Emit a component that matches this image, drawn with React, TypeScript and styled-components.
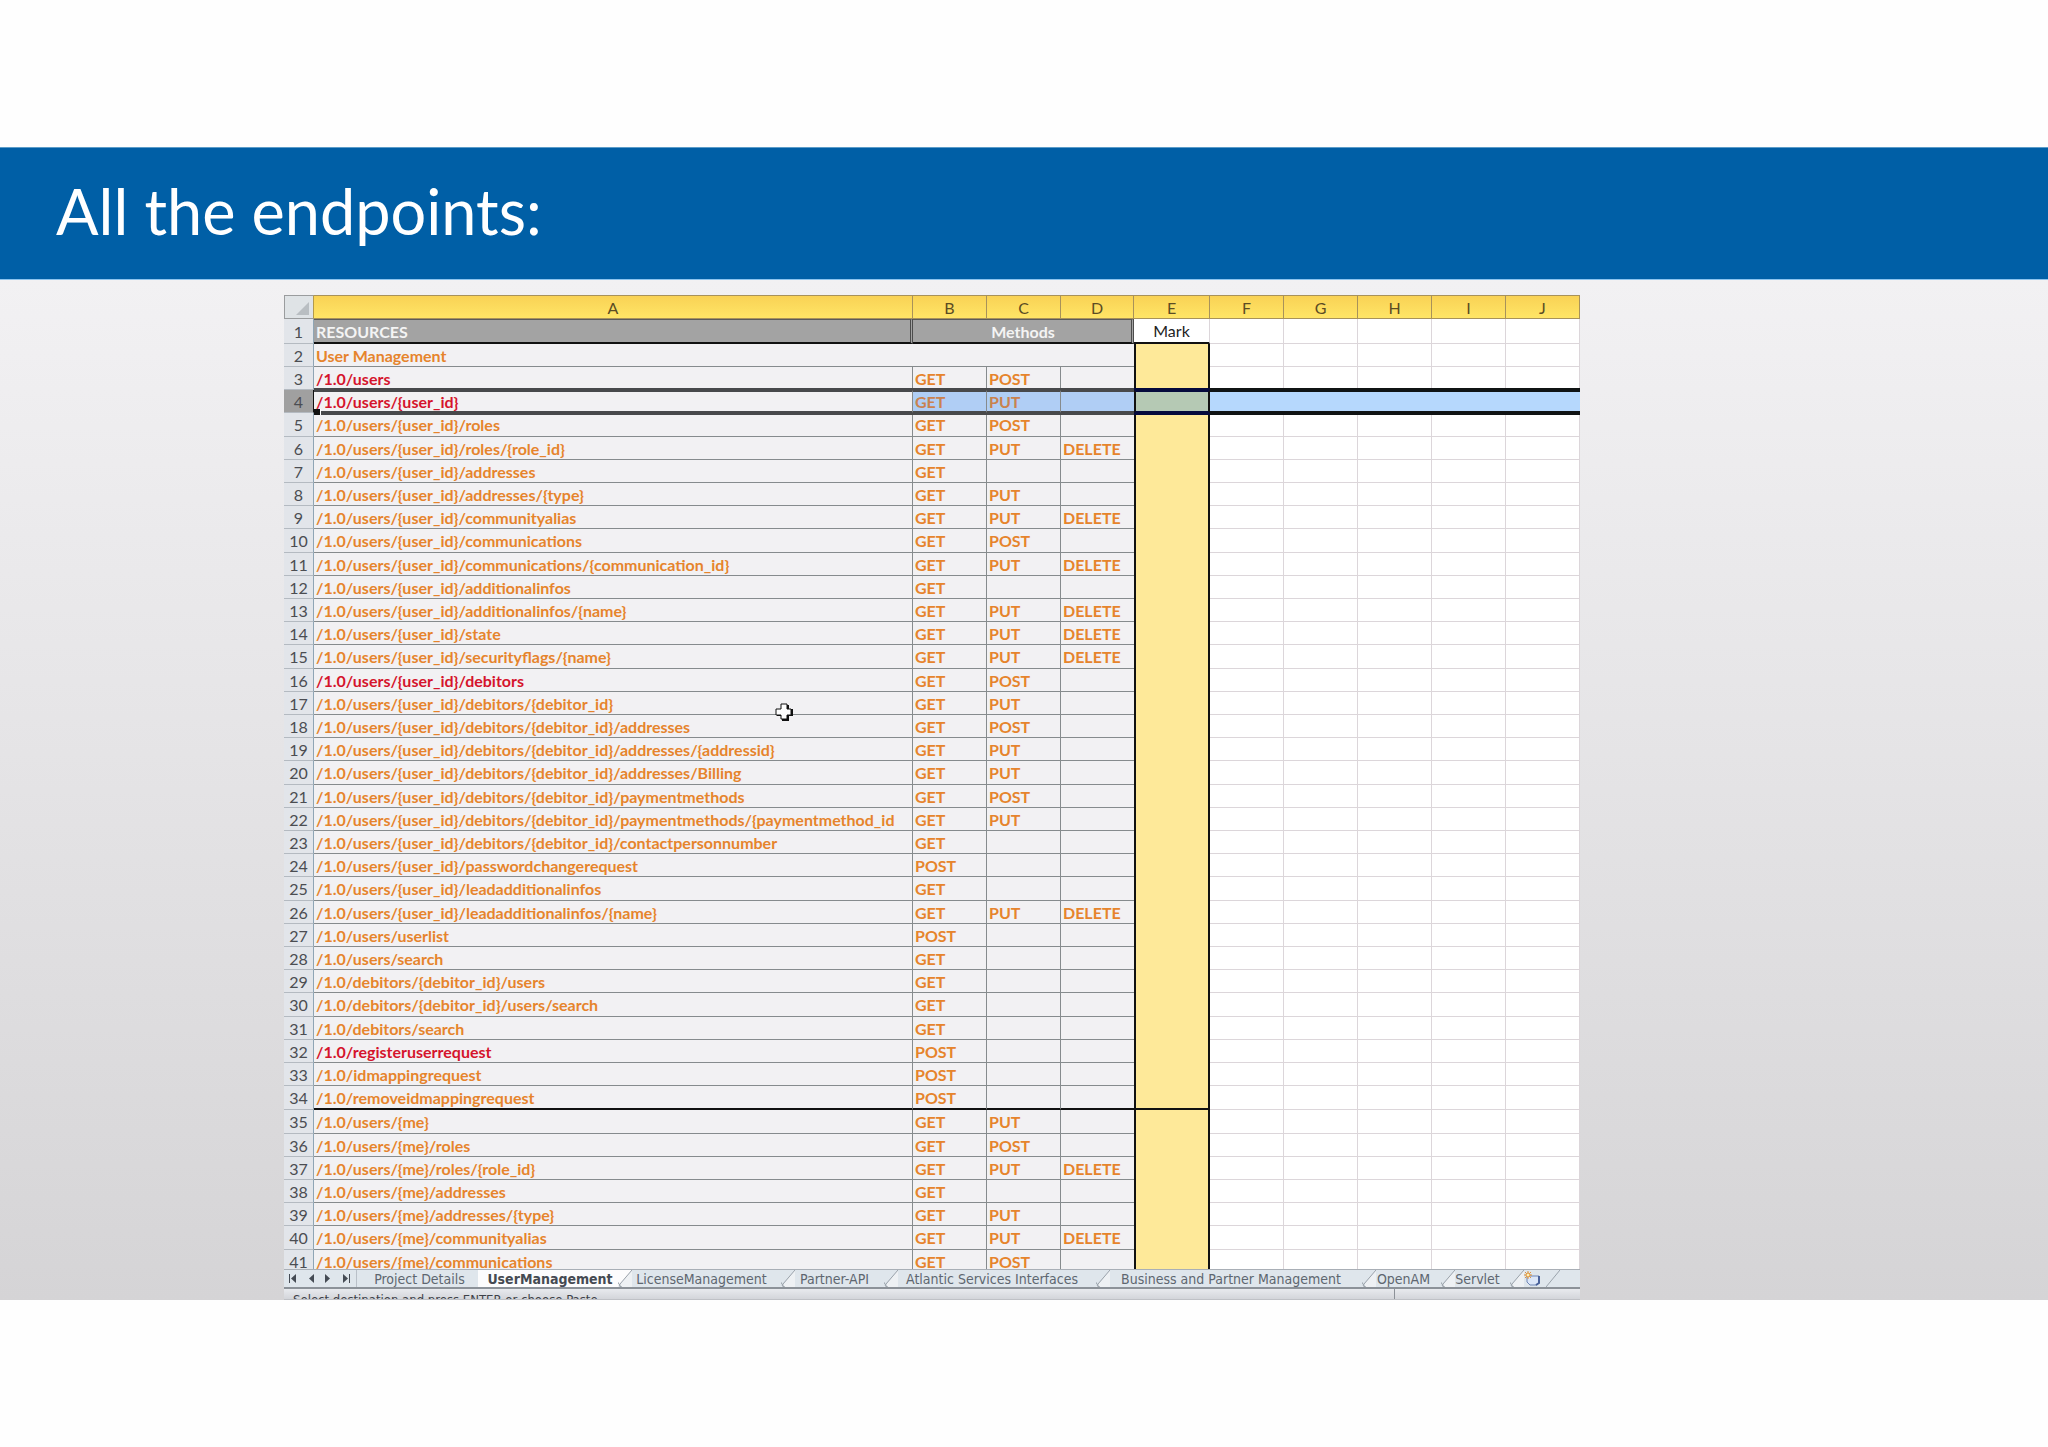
import React from "react";
import styled, { createGlobalStyle, css } from "styled-components";

type Tone = "orange" | "red";
interface Endpoint {
  path: string;
  methods: string[];
  tone?: Tone;
}

const U = "/1.0/users/{user_id}";
const M = "/1.0/users/{me}";
const D = U + "/debitors/{debitor_id}";

const ep = (path: string, methods: string, tone: Tone = "orange"): Endpoint => ({
  path,
  methods: methods.split(" "),
  tone,
});

const endpoints: Endpoint[] = [
  ep("/1.0/users", "GET POST", "red"),
  ep(U, "GET PUT", "red"),
  ep(U + "/roles", "GET POST"),
  ep(U + "/roles/{role_id}", "GET PUT DELETE"),
  ep(U + "/addresses", "GET"),
  ep(U + "/addresses/{type}", "GET PUT"),
  ep(U + "/communityalias", "GET PUT DELETE"),
  ep(U + "/communications", "GET POST"),
  ep(U + "/communications/{communication_id}", "GET PUT DELETE"),
  ep(U + "/additionalinfos", "GET"),
  ep(U + "/additionalinfos/{name}", "GET PUT DELETE"),
  ep(U + "/state", "GET PUT DELETE"),
  ep(U + "/securityflags/{name}", "GET PUT DELETE"),
  ep(U + "/debitors", "GET POST", "red"),
  ep(D, "GET PUT"),
  ep(D + "/addresses", "GET POST"),
  ep(D + "/addresses/{addressid}", "GET PUT"),
  ep(D + "/addresses/Billing", "GET PUT"),
  ep(D + "/paymentmethods", "GET POST"),
  ep(D + "/paymentmethods/{paymentmethod_id", "GET PUT"),
  ep(D + "/contactpersonnumber", "GET"),
  ep(U + "/passwordchangerequest", "POST"),
  ep(U + "/leadadditionalinfos", "GET"),
  ep(U + "/leadadditionalinfos/{name}", "GET PUT DELETE"),
  ep("/1.0/users/userlist", "POST"),
  ep("/1.0/users/search", "GET"),
  ep("/1.0/debitors/{debitor_id}/users", "GET"),
  ep("/1.0/debitors/{debitor_id}/users/search", "GET"),
  ep("/1.0/debitors/search", "GET"),
  ep("/1.0/registeruserrequest", "POST", "red"),
  ep("/1.0/idmappingrequest", "POST"),
  ep("/1.0/removeidmappingrequest", "POST"),
  ep(M, "GET PUT"),
  ep(M + "/roles", "GET POST"),
  ep(M + "/roles/{role_id}", "GET PUT DELETE"),
  ep(M + "/addresses", "GET"),
  ep(M + "/addresses/{type}", "GET PUT"),
  ep(M + "/communityalias", "GET PUT DELETE"),
  ep(M + "/communications", "GET POST"),
];

const SELECTED_ROW = 4;
const GROUP_END_ROW = 34;
const plainColumns = ["F", "G", "H", "I", "J"];

const tabs = [
  { name: "Project Details", width: 121 },
  { name: "UserManagement", width: 140, active: true },
  { name: "LicenseManagement", width: 163 },
  { name: "Partner-API", width: 103 },
  { name: "Atlantic Services Interfaces", width: 212 },
  { name: "Business and Partner Management", width: 266 },
  { name: "OpenAM", width: 79 },
  { name: "Servlet", width: 69 },
];

const colors = {
  orange: "#e6842c",
  red: "#d5142c",
  line: "#868b8d",
  faint: "#dcd6da",
  panel: "#f2f1f3",
};

const GlobalStyle = createGlobalStyle`
  * { box-sizing: border-box; }
  body { margin: 0; background: #fefefe; }
`;

const Page = styled.main`
  padding-top: 147px;
  font-family: Lato, "Open Sans", sans-serif;
`;

const Banner = styled.header`
  display: flex;
  align-items: center;
  height: 133px;
  padding: 0 56px 6px;
  background: #005fa6;
  border-top: 1px solid #5c9cc8;
  border-bottom: 1px solid #8cc4ee;
`;

const Title = styled.h1`
  margin: 0;
  font-size: 63px;
  line-height: 72px;
  font-weight: 400;
  color: #fff;
`;

const Body = styled.section`
  display: grid;
  grid-template-columns: minmax(0, 284fr) minmax(0, 1296fr) minmax(0, 468fr);
  padding-top: 15px;
  background: linear-gradient(#f2f1f3, #e4e3e5 50%, #d5d4d6);
`;

const Workbook = styled.div`
  grid-column: 2;
  display: flex;
  flex-direction: column;
  min-width: 0;
`;

const Pane = styled.div`
  position: relative;
  height: 974px;
  overflow: hidden;
  background: #fff;
`;

const Sheet = styled.table`
  width: 100%;
  table-layout: fixed;
  border-collapse: separate;
  border-spacing: 0;
  font-size: 16px;
  line-height: 18px;
`;

const Col = styled.col<{ $w?: number }>`
  ${(p) => p.$w && `width: ${p.$w}px;`}
`;

const Row = styled.tr<{ $h: number }>`
  height: ${(p) => p.$h}px;
`;

const Corner = styled.td`
  padding: 0 4px 3px 0;
  background: #dfe3e6;
  border: 1px solid #9a9c9e;
  border-right-color: #b39a4c;
  text-align: right;
  vertical-align: bottom;
  line-height: 0;
`;

const ColumnHead = styled.th`
  padding: 2px 0 0;
  font-weight: 400;
  color: #5b4c24;
  background: linear-gradient(#f9d255, #ffe566);
  border: solid #a8925a;
  border-width: 1px 1px 1px 0;
`;

const RowHead = styled.th<{ $selected?: boolean }>`
  padding: 1px 0 0;
  font-weight: 400;
  color: #4b4d52;
  background: ${(p) => (p.$selected ? "#a0a0a0" : "#e2e5ea")};
  border-right: 1px solid ${(p) => (p.$selected ? "#111" : "#8fa5b5")};
  border-bottom: 1px solid #b4bac1;
`;

const cell = css`
  padding: 1px 0 0 2px;
  text-align: left;
  white-space: nowrap;
  overflow: hidden;
`;

const TitleCell = styled.th<{ $center?: boolean }>`
  ${cell}
  color: #f4f4f4;
  background: #a3a3a3;
  border-top: 1px solid #5a5a5a;
  border-right: 3px double #4c4c4c;
  border-bottom: 2px solid #111;
  text-align: ${(p) => (p.$center ? "center" : "left")};
`;

const MarkHead = styled.th`
  ${cell}
  padding-left: 0;
  font-weight: 400;
  text-align: center;
  color: #222;
  border-right: 1px solid ${colors.faint};
  border-bottom: 2px solid #111;
`;

const selectedEdge = (color: string) => css`
  position: relative;
  z-index: 1;
  padding-top: 0;
  overflow: visible;
  border-top: 2px solid ${color};
  border-bottom: 2px solid ${color};
  box-shadow: 0 -2px 0 ${color}, 0 2px 0 ${color};
`;

const DataCell = styled.td<{ $tone?: Tone; $first?: boolean; $selected?: boolean; $groupEnd?: boolean; $last?: boolean }>`
  ${cell}
  font-weight: 700;
  color: ${(p) => colors[p.$tone ?? "orange"]};
  background: ${(p) => (p.$selected && !p.$first ? "#b0cef5" : colors.panel)};
  border-right: ${(p) => (p.$last ? "0" : `1px solid ${colors.line}`)};
  border-bottom: 1px solid ${colors.line};
  ${(p) => p.$groupEnd && "border-bottom: 2px solid #111;"}
  ${(p) => p.$selected && selectedEdge("#48494b")}
  ${(p) => p.$selected && !p.$first && "color: #c9824f;"}
`;

const MarkCell = styled.td<{ $selected?: boolean; $groupEnd?: boolean }>`
  padding: 0;
  background: ${(p) => (p.$selected ? "#b5c9b4" : "#fee999")};
  border: solid #111;
  border-width: 0 2px;
  ${(p) => p.$groupEnd && "border-bottom: 2px solid #111;"}
  ${(p) => p.$selected && selectedEdge("#050a3c")}
`;

const BlankCell = styled.td<{ $selected?: boolean }>`
  padding: 0;
  border-right: 1px solid ${colors.faint};
  border-bottom: 1px solid ${colors.faint};
  ${(p) => p.$selected && selectedEdge("#101414")}
  ${(p) => p.$selected && "background: #b6d8fd; border-right: 0;"}
`;

const FillHandle = styled.span`
  position: absolute;
  left: 0;
  bottom: -4px;
  width: 7px;
  height: 6px;
  background: #111;
  border-right: 1px solid #fff;
`;

const Pointer = styled.svg`
  position: absolute;
  left: 491px;
  top: 408px;
  z-index: 2;
`;

const TabBar = styled.nav`
  display: flex;
  height: 20px;
  background: #dfe6ec;
  border-top: 1px solid #a9afb6;
  border-bottom: 2px solid #8c9299;
  font-family: "DejaVu Sans Condensed", "Noto Sans", sans-serif;
`;

const Scrollers = styled.div`
  display: flex;
  align-items: center;
  justify-content: space-between;
  width: 73px;
  padding: 0 6px 0 5px;
  border-right: 1px solid #b9c0c8;
`;

const PlainButton = styled.button`
  display: flex;
  padding: 0;
  border: 0;
  background: none;
`;

const Tab = styled.button<{ $w: number; $active?: boolean }>`
  position: relative;
  flex: 0 0 ${(p) => p.$w}px;
  padding: 0 0 0 4px;
  border: 0;
  font-family: inherit;
  font-size: 14px;
  line-height: 18px;
  white-space: nowrap;
  color: ${(p) => (p.$active ? "#454a52" : "#5e6670")};
  font-weight: ${(p) => (p.$active ? 700 : 400)};
  background: ${(p) => (p.$active ? "#fcfcfd" : "transparent")};
`;

const Slant = styled.svg`
  position: absolute;
  left: 0;
  top: 0;
`;

const NewTab = styled.button`
  position: relative;
  flex: 0 0 50px;
  padding: 0 0 0 13px;
  border: 0;
  background: none;
  text-align: left;
  line-height: 0;
`;

const SlantEnd = styled(Slant)`
  left: auto;
  right: 0;
`;

const StatusBar = styled.footer`
  display: flex;
  height: 11px;
  overflow: hidden;
  background: linear-gradient(#e8eaee, #d3d5da);
  border-bottom: 1px solid #bfc1c6;
`;

const StatusText = styled.p`
  flex: 0 0 1111px;
  margin: 0;
  padding: 2px 0 0 9px;
  border-right: 1px solid #8c9198;
  font-family: "DejaVu Sans Condensed", "Noto Sans", sans-serif;
  font-size: 13px;
  line-height: 18px;
  color: #3d4148;
`;

const rowHeight = (n: number) => (n % 5 === 0 || n === GROUP_END_ROW ? 24 : 23);

const slantPath = (
  <>
    <path d="M14 0 L2 15 Q0 17 0 17 L14 17 Z" fill="#eef1f4" />
    <path d="M14 0 L2 14 Q0 17 4 17 M-1 11 L3 17" fill="none" stroke="#9aa2ab" />
  </>
);

function ScrollIcon({ back, edge }: { back?: boolean; edge?: boolean }) {
  return (
    <svg width="8" height="9" viewBox="0 0 8 9" fill="#454b54">
      <path d={back ? "M7 0 V9 L2 4.5 Z" : "M1 0 V9 L6 4.5 Z"} />
      {edge && <rect x={back ? 0 : 7} width="1" height="9" />}
    </svg>
  );
}

function EndpointRow({ n, endpoint }: { n: number; endpoint: Endpoint }) {
  const selected = n === SELECTED_ROW;
  const groupEnd = n === GROUP_END_ROW;
  return (
    <Row $h={rowHeight(n)}>
      <RowHead scope="row" $selected={selected}>{n}</RowHead>
      <DataCell $first $tone={endpoint.tone} $selected={selected} $groupEnd={groupEnd}>
        {endpoint.path}
        {selected && <FillHandle />}
      </DataCell>
      {[0, 1, 2].map((i) => (
        <DataCell key={i} $selected={selected} $groupEnd={groupEnd} $last={i === 2}>
          {endpoint.methods[i]}
        </DataCell>
      ))}
      <MarkCell $selected={selected} $groupEnd={groupEnd} />
      {plainColumns.map((c) => (
        <BlankCell key={c} $selected={selected} />
      ))}
    </Row>
  );
}

export default function App() {
  return (
    <Page>
      <GlobalStyle />
      <Banner>
        <Title>All the endpoints:</Title>
      </Banner>
      <Body>
        <Workbook>
          <Pane>
            <Sheet>
              <colgroup>
                <Col $w={30} />
                <Col />
                {[74, 74, 73, 76, 74, 74, 74, 74, 74].map((w, i) => (
                  <Col key={i} $w={w} />
                ))}
              </colgroup>
              <thead>
                <Row $h={24}>
                  <Corner>
                    <svg width="13" height="13" viewBox="0 0 13 13">
                      <path d="M13 0 V13 H0 Z" fill="#b9bec2" />
                    </svg>
                  </Corner>
                  {["A", "B", "C", "D", "E", ...plainColumns].map((c) => (
                    <ColumnHead key={c} scope="col">{c}</ColumnHead>
                  ))}
                </Row>
              </thead>
              <tbody>
                <Row $h={25}>
                  <RowHead scope="row">1</RowHead>
                  <TitleCell>RESOURCES</TitleCell>
                  <TitleCell colSpan={3} $center>Methods</TitleCell>
                  <MarkHead>Mark</MarkHead>
                  {plainColumns.map((c) => (
                    <BlankCell key={c} />
                  ))}
                </Row>
                <Row $h={rowHeight(2)}>
                  <RowHead scope="row">2</RowHead>
                  <DataCell colSpan={4} $last>User Management</DataCell>
                  <MarkCell />
                  {plainColumns.map((c) => (
                    <BlankCell key={c} />
                  ))}
                </Row>
                {endpoints.map((e, i) => (
                  <EndpointRow key={e.path} n={i + 3} endpoint={e} />
                ))}
              </tbody>
            </Sheet>
            <Pointer width="19" height="19" viewBox="0 0 19 19" aria-hidden="true">
              <path d="M7 2 H14 V6 H18 V13 H14 V18 H7 V13 H2 V6 H7 Z" fill="#111" />
              <path d="M6 1 H12 V6 H16 V12 H12 V16 H6 V12 H1 V6 H6 Z" fill="#fff" stroke="#111" />
            </Pointer>
          </Pane>
          <TabBar aria-label="Sheets">
            <Scrollers>
              <PlainButton aria-label="First sheet"><ScrollIcon back edge /></PlainButton>
              <PlainButton aria-label="Previous sheet"><ScrollIcon back /></PlainButton>
              <PlainButton aria-label="Next sheet"><ScrollIcon /></PlainButton>
              <PlainButton aria-label="Last sheet"><ScrollIcon edge /></PlainButton>
            </Scrollers>
            {tabs.map((t, i) => (
              <Tab key={t.name} $w={t.width} $active={t.active}>
                {i > 1 && (
                  <Slant width="14" height="17" viewBox="0 0 14 17">
                    {i === 2 && <path d="M0 0 H14 L0 17 Z" fill="#fcfcfd" />}
                    {slantPath}
                  </Slant>
                )}
                {t.name}
              </Tab>
            ))}
            <NewTab aria-label="Insert sheet">
              <Slant width="14" height="17" viewBox="0 0 14 17">{slantPath}</Slant>
              <svg width="18" height="15" viewBox="0 0 18 15">
                <path d="M4 5 H16 V12 L14 14 H7 L4 11 Z" fill="#dbe6f8" stroke="#6f86b5" />
                <path d="M16 5 V12 L13 14" fill="none" stroke="#4a629b" strokeWidth="2" />
                <path d="M5 0 V8 M1 4 H9 M2 1 L8 7 M8 1 L2 7" stroke="#dd9440" />
                <circle cx="5" cy="4" r="2" fill="#fff0b8" stroke="#dd9440" />
              </svg>
              <SlantEnd width="14" height="17" viewBox="0 0 14 17">
                <path d="M14 0 L0 17" fill="none" stroke="#9aa2ab" />
              </SlantEnd>
            </NewTab>
          </TabBar>
          <StatusBar>
            <StatusText>Select destination and press ENTER or choose Paste</StatusText>
          </StatusBar>
        </Workbook>
      </Body>
    </Page>
  );
}
